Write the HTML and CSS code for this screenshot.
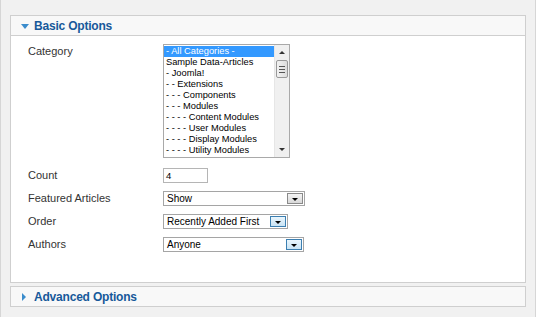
FILE: index.html
```html
<!DOCTYPE html>
<html>
<head>
  <meta charset="UTF-8">
  <title>Module Options</title>
  <link rel="stylesheet" href="styles.css">
</head>
<body>
  <div class="page">
    <div class="panel">
      <div class="panel-head">
        <span class="arrow-down"></span>
        <span class="panel-title">Basic Options</span>
      </div>
      <div class="panel-body">
        <div class="row row-top">
          <label class="field-label">Category</label>
          <div class="listbox">
            <div class="list-items">
              <div class="item selected">- All Categories -</div>
              <div class="item">Sample Data-Articles</div>
              <div class="item">- Joomla!</div>
              <div class="item">- - Extensions</div>
              <div class="item">- - - Components</div>
              <div class="item">- - - Modules</div>
              <div class="item">- - - - Content Modules</div>
              <div class="item">- - - - User Modules</div>
              <div class="item">- - - - Display Modules</div>
              <div class="item">- - - - Utility Modules</div>
            </div>
            <div class="scrollbar">
              <span class="sb-up"></span>
              <div class="sb-thumb">
                <span></span><span></span><span></span>
              </div>
              <span class="sb-down"></span>
            </div>
          </div>
        </div>
        <div class="row">
          <label class="field-label">Count</label>
          <div class="text-input">4</div>
        </div>
        <div class="row">
          <label class="field-label">Featured Articles</label>
          <div class="dropdown w-featured">
            <span class="dd-value">Show</span>
            <span class="dd-button"><i></i></span>
          </div>
        </div>
        <div class="row">
          <label class="field-label">Order</label>
          <div class="dropdown w-order">
            <span class="dd-value">Recently Added First</span>
            <span class="dd-button hot"><i></i></span>
          </div>
        </div>
        <div class="row">
          <label class="field-label">Authors</label>
          <div class="dropdown w-authors">
            <span class="dd-value">Anyone</span>
            <span class="dd-button hot"><i></i></span>
          </div>
        </div>
      </div>
    </div>

    <div class="panel panel-closed">
      <div class="panel-head">
        <span class="arrow-right"></span>
        <span class="panel-title">Advanced Options</span>
      </div>
    </div>
  </div>
</body>
</html>
```

FILE: styles.css
```css
body {
  margin: 0;
  padding: 0;
  background-color: #fff;
  font-family: "Liberation Sans", Arial, sans-serif;
  overflow: hidden;
}

.page {
  width: 536px;
  height: 317px;
  background-color: #f1f1f1;
  border-left: 1px solid #d6d6d6;
  border-right: 1px solid #d6d6d6;
  padding-top: 15px;
  box-sizing: border-box;
}

.panel {
  margin-left: 9px;
  width: 516px;
  border: 1px solid #cfcfcf;
  box-sizing: border-box;
  background-color: #fff;
}

.panel-closed {
  margin-top: 3px;
  background-color: #f8f8f8;
}

.panel-head {
  height: 19px;
  background-color: #f8f8f8;
  border-bottom: 1px solid #cfcfcf;
  display: flex;
  align-items: center;
  padding-left: 10px;
}

.panel-closed .panel-head {
  border-bottom: none;
}

.panel-title {
  color: #17599a;
  font-weight: bold;
  font-size: 12px;
  margin-left: 5px;
  letter-spacing: -0.2px;
}

.arrow-down {
  width: 0;
  height: 0;
  border-left: 4px solid transparent;
  border-right: 4px solid transparent;
  border-top: 5px solid #3b8ccc;
  margin-top: 1px;
}

.arrow-right {
  width: 0;
  height: 0;
  border-top: 4px solid transparent;
  border-bottom: 4px solid transparent;
  border-left: 4px solid #3b8ccc;
  margin-left: 1px;
  margin-right: 3px;
}

.panel-body {
  padding: 7px 0 31px 17px;
  display: flex;
  flex-direction: column;
  gap: 9px;
}

.row {
  display: flex;
  align-items: center;
  height: 14px;
}

.row-top {
  align-items: flex-start;
  height: auto;
  margin-bottom: 1px;
}

.field-label {
  width: 135px;
  font-size: 11px;
  color: #333;
}

.row-top .field-label {
  margin-top: 2px;
}

/* listbox */
.listbox {
  width: 127px;
  height: 114px;
  margin-top: 1px;
  box-sizing: border-box;
  border: 1px solid #a9a9a9;
  display: flex;
  background: #fff;
}

.list-items {
  flex: 1;
  padding-top: 1px;
}

.item {
  font-size: 9.3px;
  line-height: 11px;
  height: 11px;
  padding-left: 2px;
  color: #000;
  white-space: nowrap;
}

.item.selected {
  background-color: #3399ff;
  color: #fff;
}

.scrollbar {
  width: 14px;
  background-color: #f0f0f0;
  border-left: 1px solid #e6e6e6;
  display: flex;
  flex-direction: column;
  align-items: center;
}

.sb-up {
  margin-top: 6px;
  width: 0;
  height: 0;
  border-left: 3px solid transparent;
  border-right: 3px solid transparent;
  border-bottom: 3px solid #333;
}

.sb-thumb {
  margin-top: 6px;
  width: 12px;
  height: 18px;
  box-sizing: border-box;
  border: 1px solid #999;
  border-radius: 2px;
  background: linear-gradient(to right, #f2f2f2, #dcdcdc);
  display: flex;
  flex-direction: column;
  justify-content: center;
  align-items: center;
  gap: 2px;
}

.sb-thumb span {
  width: 6px;
  height: 1px;
  background-color: #555;
}

.sb-down {
  margin-top: auto;
  margin-bottom: 6px;
  width: 0;
  height: 0;
  border-left: 3px solid transparent;
  border-right: 3px solid transparent;
  border-top: 3px solid #333;
}

/* inputs */
.text-input {
  width: 45px;
  height: 15px;
  box-sizing: border-box;
  border: 1px solid #b5b5b5;
  font-size: 9.5px;
  line-height: 13px;
  padding-left: 2px;
  background: #fff;
}

.dropdown {
  height: 15px;
  box-sizing: border-box;
  border: 1px solid #a5a5a5;
  display: flex;
  align-items: center;
  background: #fff;
}

.w-featured { width: 142px; }
.w-order { width: 125px; }
.w-authors { width: 141px; }

.dd-value {
  flex: 1;
  font-size: 10px;
  padding-left: 3px;
  color: #000;
  white-space: nowrap;
}

.dd-button {
  width: 16px;
  height: 11px;
  margin-right: 1px;
  box-sizing: border-box;
  border: 1px solid #8a8a8a;
  background: linear-gradient(#f4f4f4, #d8d8d8);
  display: flex;
  justify-content: center;
  align-items: flex-end;
  padding-bottom: 2px;
}

.dd-button.hot {
  border-color: #3c7fb1;
  background: linear-gradient(#eaf6fd, #c9e3f4);
}

.dd-button i {
  width: 0;
  height: 0;
  border-left: 3px solid transparent;
  border-right: 3px solid transparent;
  border-top: 3px solid #000;
}
```
